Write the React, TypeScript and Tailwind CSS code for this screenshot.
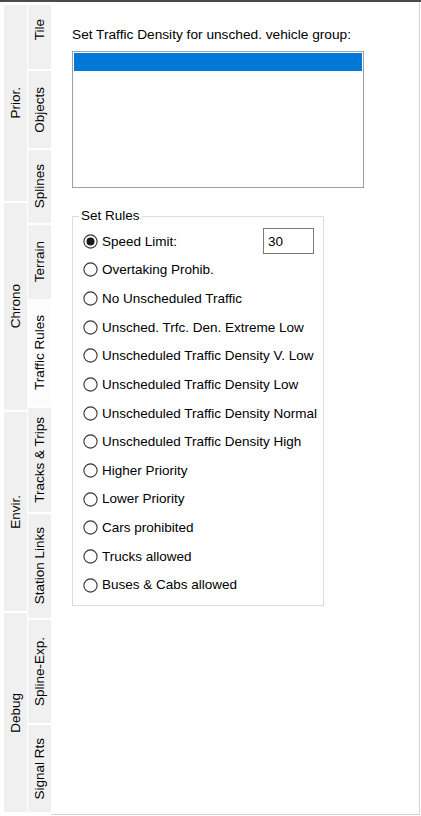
import React from 'react';

type Tab = { label: string; h: number; selected?: boolean; faintBottom?: boolean; pb?: string };

const outerTabs: Tab[] = [
  { label: 'Prior.', h: 198 },
  { label: 'Chrono', h: 209 },
  { label: 'Envir.', h: 201 },
  { label: 'Debug', h: 200, faintBottom: true },
];

const innerTabs: Tab[] = [
  { label: 'Tile', h: 66, pb: 'pb-[14px]' },
  { label: 'Objects', h: 79 },
  { label: 'Splines', h: 75 },
  { label: 'Terrain', h: 75, faintBottom: true },
  { label: 'Traffic Rules', h: 108, selected: true },
  { label: 'Tracks & Trips', h: 106 },
  { label: 'Station Links', h: 106 },
  { label: 'Spline-Exp.', h: 105 },
  { label: 'Signal Rts', h: 88, faintBottom: true },
];

const rules = [
  'Speed Limit:',
  'Overtaking Prohib.',
  'No Unscheduled Traffic',
  'Unsched. Trfc. Den. Extreme Low',
  'Unscheduled Traffic Density V. Low',
  'Unscheduled Traffic Density Low',
  'Unscheduled Traffic Density Normal',
  'Unscheduled Traffic Density High',
  'Higher Priority',
  'Lower Priority',
  'Cars prohibited',
  'Trucks allowed',
  'Buses & Cabs allowed',
];

function TabColumn({ tabs }: { tabs: Tab[] }) {
  return (
    <div className="flex w-[24px] flex-col">
      {tabs.map((t) => (
        <div
          key={t.label}
          style={{ height: t.h }}
          className={`flex items-center justify-center border-l border-white ${t.pb ?? ''} ${
            t.selected ? 'bg-[#fcfcfc]' : 'bg-[#f0f0f0]'
          } ${t.faintBottom ? 'border-b border-[#d8d8d8]' : 'border-b-2 border-[#7e7e7e]'}`}
        >
          <span className="rotate-180 whitespace-nowrap text-[13.5px] leading-none text-black [writing-mode:vertical-rl]">
            {t.label}
          </span>
        </div>
      ))}
    </div>
  );
}

function Radio({ checked }: { checked?: boolean }) {
  return (
    <svg width="15" height="15" viewBox="0 0 15 15" className="shrink-0">
      <circle cx="7.5" cy="7.5" r="6.6" fill="#fff" stroke="#333" strokeWidth="1.1" />
      {checked && <circle cx="7.5" cy="7.5" r="4" fill="#1a1a1a" />}
    </svg>
  );
}

export default function App() {
  return (
    <div
      className="flex h-[816px] w-[421px] flex-col overflow-hidden border-t-2 border-[#4a4a4a] bg-white text-black"
      style={{ fontFamily: '"Liberation Sans", Arial, sans-serif' }}
    >
      <div className="flex flex-1">
        {/* Tab strip */}
        <div className="flex w-[51px] shrink-0 pl-[3px] pt-[3px]">
          <TabColumn tabs={outerTabs} />
          <TabColumn tabs={innerTabs} />
        </div>

        {/* Page */}
        <div className="mb-[1px] mr-[1px] flex flex-1 flex-col border-b border-r border-[#d4d4d4] bg-white pl-[21px] pt-[25px]">
          <div className="h-[16px] text-[13.7px] leading-[16px]">Set Traffic Density for unsched. vehicle group:</div>

          <div className="mt-[8px] h-[137px] w-[292px] border border-[#a0a0a0] bg-white p-[1px]">
            <div className="h-[18px] w-full bg-[#0078d7]" />
          </div>

          <fieldset className="mt-[20px] w-[252px] min-w-0 border border-[#dcdcdc] pb-[5px] pl-[10px] pr-0 pt-[3px]">
            <legend className="ml-[-4px] px-[2px] text-[13.5px] leading-[16px]">Set Rules</legend>
            {rules.map((r, i) => (
              <div key={r} className="flex h-[28.67px] items-center text-[13.5px] leading-none">
                <Radio checked={i === 0} />
                <span className="ml-[4px] whitespace-nowrap">{r}</span>
                {i === 0 && (
                  <div className="ml-auto mr-[9px] flex h-[26px] w-[51px] items-center border border-[#7a7a7a] bg-white pl-[4px]">
                    30
                  </div>
                )}
              </div>
            ))}
          </fieldset>
        </div>
      </div>
    </div>
  );
}
